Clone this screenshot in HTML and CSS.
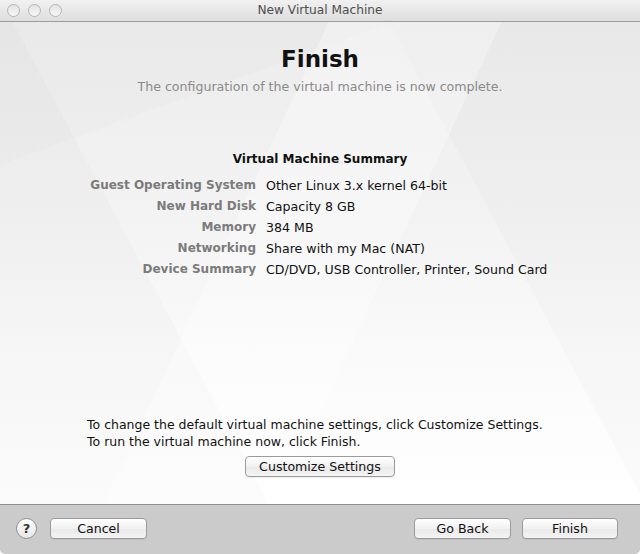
FILE: index.html
```html
<!DOCTYPE html>
<html>
<head>
<meta charset="utf-8">
<link rel="stylesheet" href="styles.css">
</head>
<body>
<div class="window">
  <div class="titlebar">
    <div class="lights">
      <span class="light"></span><span class="light"></span><span class="light"></span>
    </div>
    <div class="title">New Virtual Machine</div>
  </div>
  <div class="content">
    <h1 class="heading">Finish</h1>
    <p class="subtitle">The configuration of the virtual machine is now complete.</p>
    <h2 class="summary-title">Virtual Machine Summary</h2>
    <div class="summary">
      <div class="label">Guest Operating System</div><div class="value">Other Linux 3.x kernel 64-bit</div>
      <div class="label">New Hard Disk</div><div class="value">Capacity 8 GB</div>
      <div class="label">Memory</div><div class="value">384 MB</div>
      <div class="label">Networking</div><div class="value">Share with my Mac (NAT)</div>
      <div class="label">Device Summary</div><div class="value">CD/DVD, USB Controller, Printer, Sound Card</div>
    </div>
    <div class="notes">
      <p>To change the default virtual machine settings, click Customize Settings.</p>
      <p>To run the virtual machine now, click Finish.</p>
    </div>
    <div class="customize-row">
      <button class="btn btn-customize">Customize Settings</button>
    </div>
  </div>
  <div class="footer">
    <button class="help">?</button>
    <button class="btn btn-cancel">Cancel</button>
    <div class="spacer"></div>
    <button class="btn btn-back">Go Back</button>
    <button class="btn btn-finish">Finish</button>
  </div>
</div>
</body>
</html>
```
FILE: styles.css
```css
html, body {
  margin: 0;
  padding: 0;
  background: #ffffff;
}
body {
  font-family: "DejaVu Sans", "Liberation Sans", sans-serif;
  font-size: 12.6px;
  color: #000;
}
.window {
  width: 640px;
  height: 554px;
  display: flex;
  flex-direction: column;
  overflow: hidden;
  border-radius: 0 0 5px 5px;
}
.titlebar {
  height: 21px;
  border-bottom: 1px solid #9c9c9c;
  background: linear-gradient(#f1f1f1, #dedede);
  display: flex;
  align-items: center;
  position: relative;
}
.lights {
  display: flex;
  gap: 8px;
  padding-left: 7px;
}
.light {
  width: 11px;
  height: 11px;
  border-radius: 50%;
  border: 1px solid #b4b4b4;
  background: linear-gradient(#e4e4e4, #f6f6f6);
}
.title {
  position: absolute;
  left: 0;
  right: 0;
  text-align: center;
  color: #4d4d4d;
  font-size: 12.2px;
  line-height: 21px;
}
.content {
  flex: 1;
  display: flex;
  flex-direction: column;
  background:
    linear-gradient(115deg, rgba(255,255,255,0) 0 38%, rgba(255,255,255,0.3) 38% 58%, rgba(255,255,255,0) 58%),
    linear-gradient(62deg, rgba(0,0,0,0.015) 0 30%, rgba(0,0,0,0) 30% 72%, rgba(0,0,0,0.015) 72%),
    linear-gradient(160deg, rgba(0,0,0,0.012) 0 20%, rgba(0,0,0,0) 20%),
    linear-gradient(#ececec 0, #f3f3f3 200px, #fafafa 330px, #ffffff 100%);
  padding-bottom: 27px;
}
.heading {
  margin: 22px 0 0;
  font-size: 23px;
  line-height: 30px;
  font-weight: bold;
  text-align: center;
  color: #111;
}
.subtitle {
  margin: 4px 0 0;
  text-align: center;
  color: #8a8a8a;
  line-height: 18px;
}
.summary-title {
  margin: 54px 0 0;
  font-size: 12px;
  font-weight: bold;
  text-align: center;
  line-height: 18px;
  color: #111;
}
.summary {
  margin-top: 7px;
  display: grid;
  grid-template-columns: 256px 1fr;
  column-gap: 10px;
  line-height: 21px;
}
.label {
  text-align: right;
  font-weight: bold;
  font-size: 12px;
  color: #7b7b7b;
}
.value {
  color: #111;
}
.notes {
  margin-top: auto;
  padding-left: 87px;
  line-height: 17px;
  color: #111;
  font-size: 12.5px;
}
.notes p {
  margin: 0;
}
.customize-row {
  margin-top: 6px;
  display: flex;
  justify-content: center;
}
.btn {
  font-family: inherit;
  font-size: 12.6px;
  color: #111;
  height: 21px;
  padding: 0;
  border: 1px solid #9b9b9b;
  border-radius: 4px;
  background: linear-gradient(#ffffff, #f1f1f1 50%, #e9e9e9 51%, #f4f4f4);
  box-shadow: 0 1px 0 rgba(0,0,0,0.06);
}
.btn-customize {
  width: 150px;
}
.footer {
  height: 50px;
  border-top: 1px solid #8e8e8e;
  background: #cbcbcb;
  display: flex;
  align-items: flex-start;
  padding: 13px 22px 0 16px;
  box-sizing: border-box;
}
.help {
  width: 21px;
  height: 21px;
  border-radius: 50%;
  border: 1px solid #8f8f8f;
  background: linear-gradient(#ffffff, #e6e6e6);
  font-family: inherit;
  font-weight: bold;
  font-size: 13px;
  color: #333;
  padding: 0;
  line-height: 19px;
  margin-top: 0;
}
.btn-cancel {
  width: 97px;
  margin-left: 13px;
}
.spacer {
  flex: 1;
}
.btn-back {
  width: 97px;
}
.btn-finish {
  width: 96px;
  margin-left: 11px;
}
```
